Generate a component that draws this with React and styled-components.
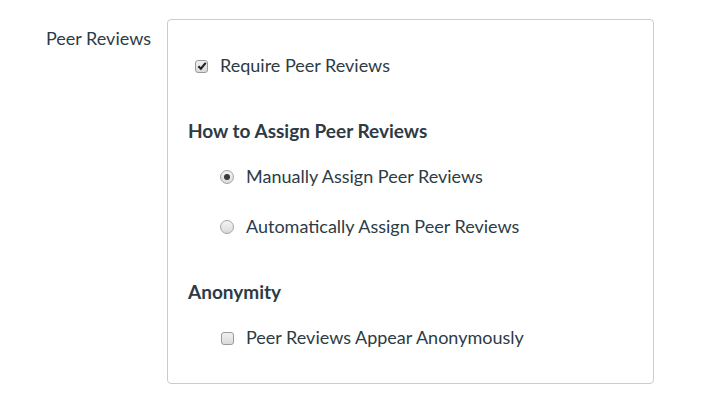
import styled, { createGlobalStyle } from 'styled-components';

const GlobalStyle = createGlobalStyle`
  body {
    margin: 0;
    background: #ffffff;
    font-family: Lato, "Open Sans", sans-serif;
    color: #2d3b45;
  }
`;

function App() {
  return (
    <Page>
      <GlobalStyle />
      <Label>Peer Reviews</Label>
      <Panel>
        <Row $indent={27}>
          <CheckBox>
            <svg width="10" height="10" viewBox="0 0 10 10">
              <path d="M1.4 5.2 L3.9 7.7 L8.7 1.8" fill="none" stroke="#222" strokeWidth="2.1" />
            </svg>
          </CheckBox>
          <OptionText>Require Peer Reviews</OptionText>
        </Row>
        <Heading $gap={24}>How to Assign Peer Reviews</Heading>
        <Row $indent={53} $gap={7}>
          <Radio $checked />
          <OptionText>Manually Assign Peer Reviews</OptionText>
        </Row>
        <Row $indent={53}>
          <Radio />
          <OptionText>Automatically Assign Peer Reviews</OptionText>
        </Row>
        <Heading $gap={24}>Anonymity</Heading>
        <Row $indent={53} $gap={7}>
          <CheckBox />
          <OptionText>Peer Reviews Appear Anonymously</OptionText>
        </Row>
      </Panel>
    </Page>
  );
}

const Page = styled.div`
  display: flex;
  align-items: flex-start;
  padding: 19px 0 0 46px;
`;

const Label = styled.div`
  width: 121px;
  font-size: 18px;
  line-height: 22px;
  padding-top: 8px;
`;

const Panel = styled.div`
  box-sizing: border-box;
  width: 487px;
  height: 365px;
  border: 1px solid #c7cdd1;
  border-radius: 4px;
  padding: 21px 0 0 20px;
`;

const Row = styled.div`
  display: flex;
  align-items: center;
  height: 50px;
  margin-top: ${(p) => (p.$gap ? p.$gap : 0)}px;
  padding-left: ${(p) => p.$indent - 20}px;
`;

const Heading = styled.div`
  height: 30px;
  display: flex;
  align-items: center;
  font-size: 19px;
  font-weight: 700;
  margin-top: ${(p) => p.$gap}px;
`;

const OptionText = styled.span`
  font-size: 18px;
  line-height: 22px;
  margin-left: 12px;
  margin-top: -2px;
`;

const CheckBox = styled.span`
  width: 11px;
  height: 11px;
  border: 1px solid #9a9a9a;
  border-radius: 3px;
  background: linear-gradient(#f0f0f0, #dadada);
  display: flex;
  align-items: center;
  justify-content: center;
`;

const Radio = styled.span`
  width: 12px;
  height: 12px;
  border: 1px solid #a3a3a3;
  border-radius: 50%;
  background: linear-gradient(#f4f4f4, #dadada);
  display: flex;
  align-items: center;
  justify-content: center;
  margin-left: -1px;
  &::after {
    content: '';
    width: 6px;
    height: 6px;
    border-radius: 50%;
    background: ${(p) => (p.$checked ? '#3a3a3a' : 'transparent')};
  }
`;

export default App;
